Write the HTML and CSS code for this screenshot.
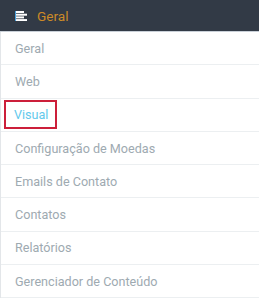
FILE: index.html
```html
<!DOCTYPE html>
<html lang="pt-BR">
  <head>
    <meta charset="UTF-8" />
    <meta name="viewport" content="width=device-width, initial-scale=1.0" />
    <title>Configurações</title>
    <link rel="stylesheet" href="styles.css">
  </head>
  <body>
    <div class="menu">
      <div class="menu-header">
        <svg class="menu-icon" width="12" height="10" viewBox="0 0 12 10">
          <rect x="0" y="0" width="9" height="2" fill="#fff" />
          <rect x="0" y="2.7" width="12" height="2" fill="#fff" />
          <rect x="0" y="5.4" width="9" height="2" fill="#fff" />
          <rect x="0" y="8.1" width="12" height="1.9" fill="#fff" />
          <rect x="0" y="0" width="1" height="10" fill="#4aa3df" />
        </svg>
        <span class="menu-title">Geral</span>
      </div>
      <ul class="menu-list">
        <li class="menu-item"><a href="#">Geral</a></li>
        <li class="menu-item"><a href="#">Web</a></li>
        <li class="menu-item"><a href="#" class="active">Visual</a></li>
        <li class="menu-item"><a href="#">Configuração de Moedas</a></li>
        <li class="menu-item"><a href="#">Emails de Contato</a></li>
        <li class="menu-item"><a href="#">Contatos</a></li>
        <li class="menu-item"><a href="#">Relatórios</a></li>
        <li class="menu-item"><a href="#">Gerenciador de Conteúdo</a></li>
      </ul>
    </div>
  </body>
</html>
```
FILE: styles.css
```css
body {
    margin: 0;
    font-family: Roboto, "Liberation Sans", sans-serif;
    background-color: #fff;
}
.menu {
    width: 259px;
}
.menu-header {
    display: flex;
    align-items: center;
    height: 31px;
    padding: 0 15px;
    background-color: #323a46;
    border-bottom: 1px solid #c9d0d8;
    box-sizing: content-box;
}
.menu-icon {
    margin-right: 10px;
}
.menu-title {
    color: #cc8a27;
    font-size: 13.6px;
}
.menu-list {
    list-style: none;
    margin: 0;
    padding: 0;
    border-left: 1px solid #e3e6e9;
}
.menu-item {
    display: flex;
    align-items: center;
    height: 32.3px;
    padding: 0 14px;
    border-bottom: 1px solid #eceff1;
}
.menu-item a {
    color: #9eaab1;
    font-size: 12.6px;
    text-decoration: none;
}
.menu-item a.active {
    color: #62c9ec;
    margin-left: -11px;
    padding: 5px 7px 5px 8px;
    border: 2px solid #cc1f3a;
}
```
